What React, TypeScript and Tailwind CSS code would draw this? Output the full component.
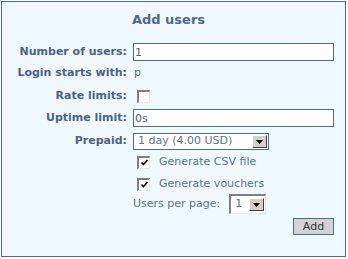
import React from "react";

function Check({ checked }: { checked?: boolean }) {
  return (
    <span className="ml-[4px] flex h-[13px] w-[13px] items-center justify-center border-t-2 border-l-2 border-r border-b border-t-[#808080] border-l-[#808080] border-r-[#e8e8e8] border-b-[#e8e8e8] bg-white">
      {checked && (
        <svg width="9" height="9" viewBox="0 0 9 9">
          <path d="M1.5 4.5 L3.5 6.5 L7.5 2" stroke="#000" strokeWidth="1.6" fill="none" />
        </svg>
      )}
    </span>
  );
}

function Arrow() {
  return (
    <span className="flex h-[13px] w-[15px] items-center justify-center border-t border-l border-r border-b border-t-white border-l-white border-r-[#404040] border-b-[#404040] bg-[#d4d0c8]">
      <svg width="7" height="4" viewBox="0 0 7 4">
        <path d="M0 0 H7 L3.5 4 Z" fill="#000" />
      </svg>
    </span>
  );
}

export default function App() {
  const label = "w-[131px] shrink-0 text-right font-bold text-[#4a6385] pr-[6px]";
  const field =
    "h-[18px] w-[201px] border border-[#4e6b8c] bg-white px-[1px] text-[11px] text-[#4a6385] outline-none";
  return (
    <div className="m-px flex h-[256px] w-[345px] flex-col border border-[#4e6b8c] bg-[#f0f8ff] font-['DejaVu_Sans',sans-serif] text-[11px] text-[#5a7394]">
      <div className="mt-[10px] h-[16px] pr-[10px] text-center text-[13px] leading-[16px] font-bold text-[#4f6a8c]">
        Add users
      </div>
      <div className="mt-[15px] flex h-[18px] items-center">
        <div className={label}>Number of users:</div>
        <input readOnly value="1" className={field} />
      </div>
      <div className="flex h-[24px] items-center">
        <div className={label}>Login starts with:</div>
        <span className="pl-[1px]">p</span>
      </div>
      <div className="flex h-[22px] items-center">
        <div className={label}>Rate limits:</div>
        <Check />
      </div>
      <div className="flex h-[22px] items-center">
        <div className={label}>Uptime limit:</div>
        <input readOnly value="0s" className={field} />
      </div>
      <div className="flex h-[25px] items-center">
        <div className={label}>Prepaid:</div>
        <div className="flex h-[17px] w-[136px] items-center justify-between border border-[#4e6b8c] bg-white pl-[4px] pr-px">
          <span>1 day (4.00 USD)</span>
          <Arrow />
        </div>
      </div>
      <div className="flex h-[15px] items-center pt-px pl-[131px]">
        <Check checked />
        <span className="ml-[9px]">Generate CSV file</span>
      </div>
      <div className="flex h-[25px] items-center pt-[5px] pl-[131px]">
        <Check checked />
        <span className="ml-[9px]">Generate vouchers</span>
      </div>
      <div className="flex h-[20px] items-center pl-[131px]">
        <span>Users per page:</span>
        <div className="ml-[9px] flex h-[20px] w-[37px] items-center justify-between border-t-2 border-l-2 border-r border-b border-t-[#808080] border-l-[#808080] border-r-[#e8e8e8] border-b-[#e8e8e8] bg-white pl-[4px] pr-px">
          <span>1</span>
          <Arrow />
        </div>
      </div>
      <div className="mt-[4px] flex justify-end pr-[11px]">
        <button className="h-[17px] w-[41px] border border-[#4e6b8c] bg-[#d3d3d3] text-[11px] leading-[15px] text-[#333]">
          Add
        </button>
      </div>
    </div>
  );
}
